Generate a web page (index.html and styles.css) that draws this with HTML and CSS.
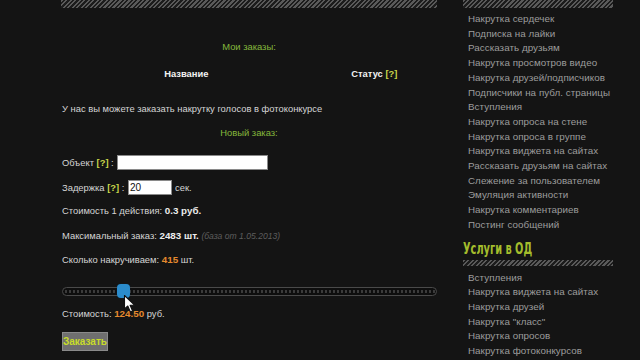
FILE: index.html
```html
<!DOCTYPE html>
<html lang="ru">
<head>
<meta charset="utf-8">
<title>Заказы</title>
<link rel="stylesheet" href="styles.css">
</head>
<body>
<div class="page">
  <main class="main">
    <div class="stripe stripe-top"></div>
    <div class="title t-orders">Мои заказы:</div>
    <div class="orders-head">
      <div class="col">Название</div>
      <div class="col">Статус <span class="help">[?]</span></div>
    </div>
    <p class="line l-intro">У нас вы можете заказать накрутку голосов в фотоконкурсе</p>
    <div class="title t-new">Новый заказ:</div>
    <div class="row r-object">Объект <span class="help">[?]</span> : <span class="field field-wide"></span></div>
    <div class="row r-delay">Задержка <span class="help">[?]</span> : <span class="field field-short">20</span><span class="unit">сек.</span></div>
    <p class="line l-cost1">Стоимость 1 действия: <b>0.3 руб.</b></p>
    <p class="line l-max">Максимальный заказ: <b>2483 шт.</b> <i class="note">(база от 1.05.2013)</i></p>
    <p class="line l-count">Сколько накручиваем: <b class="accent">415</b> шт.</p>
    <div class="slider">
      <div class="track"></div>
      <div class="handle"></div>
      <svg class="cursor" width="16" height="20" viewBox="0 0 16 20"><path d="M1.5 1.5 L1.5 15 L4.8 12 L7.4 18 L9.6 17 L7.1 11.2 L11.6 11.2 Z" fill="#fff" stroke="#111" stroke-width="1.1" stroke-linejoin="round"/></svg>
    </div>
    <p class="line l-total">Стоимость: <b class="accent">124.50</b> руб.</p>
    <div class="btn">Заказать</div>
  </main>
  <aside class="side">
    <div class="stripe stripe-top side-stripe"></div>
    <ul class="menu">
      <li>Накрутка сердечек</li>
      <li>Подписка на лайки</li>
      <li>Рассказать друзьям</li>
      <li>Накрутка просмотров видео</li>
      <li>Накрутка друзей/подписчиков</li>
      <li>Подписчики на публ. страницы</li>
      <li>Вступления</li>
      <li>Накрутка опроса на стене</li>
      <li>Накрутка опроса в группе</li>
      <li>Накрутка виджета на сайтах</li>
      <li>Рассказать друзьям на сайтах</li>
      <li>Слежение за пользователем</li>
      <li>Эмуляция активности</li>
      <li>Накрутка комментариев</li>
      <li>Постинг сообщений</li>
    </ul>
    <h2 class="side-title">Услуги в ОД</h2>
    <div class="stripe side-stripe stripe-mid"></div>
    <ul class="menu menu-od">
      <li>Вступления</li>
      <li>Накрутка виджета на сайтах</li>
      <li>Накрутка друзей</li>
      <li>Накрутка "класс"</li>
      <li>Накрутка опросов</li>
      <li>Накрутка фотоконкурсов</li>
    </ul>
  </aside>
</div>
</body>
</html>
```
FILE: styles.css
```css
html, body {
  margin: 0;
  padding: 0;
  background: #141414;
  height: 100%;
  overflow: hidden;
}
body {
  font-family: "Liberation Sans", Arial, sans-serif;
  font-size: 9.4px;
  color: #d4d4d4;
}
.page {
  display: flex;
  gap: 26px;
  padding-left: 61px;
}
.main {
  width: 376px;
  display: flex;
  flex-direction: column;
}
.stripe {
  background: repeating-linear-gradient(135deg, #5a5a5a 0 1.6px, #1c1c1c 1.6px 3.2px);
}
.stripe-top { height: 8px; }
.title {
  color: #84b83c;
  text-align: center;
  line-height: 14px;
}
.t-orders { margin-top: 32px; }
.t-new { margin-top: 10px; }
.orders-head {
  display: grid;
  grid-template-columns: 2fr 1fr;
  margin-top: 13px;
  line-height: 14px;
  font-weight: bold;
  color: #f2f2f2;
  text-align: center;
}
.help { color: #c9d64a; font-weight: bold; }
.line {
  margin: 0;
  line-height: 14px;
  padding-left: 1px;
}
.line b { font-weight: bold; color: #ececec; font-size: 9.8px; }
.l-intro { margin-top: 21px; }
.row {
  display: flex;
  align-items: center;
  height: 16px;
  padding-left: 1px;
  white-space: pre;
}
.r-object { margin-top: 14px; }
.r-delay { margin-top: 9px; }
.field {
  display: inline-block;
  background: #fff;
  height: 15px;
  border: 1px solid #8a8a8a;
  box-sizing: border-box;
  color: #111;
  font-family: "Liberation Sans", sans-serif;
  font-size: 10px;
  line-height: 13px;
  padding-left: 1px;
}
.field-wide { width: 151px; margin-left: 1px; }
.field-short { width: 44px; margin-left: 1px; }
.unit { margin-left: 3px; }
.l-cost1 { margin-top: 9px; }
.l-max { margin-top: 11px; }
.note { color: #5e5e5e; font-size: 8.6px; }
.l-count { margin-top: 10px; }
.line b.accent { color: #e58a2e; }
.slider {
  position: relative;
  height: 14px;
  margin-top: 17px;
}
.track {
  position: absolute;
  left: 1px;
  right: 0;
  top: 3px;
  height: 9px;
  border: 1px solid #4a4a4a;
  border-radius: 5px;
  box-sizing: border-box;
  background-color: #0e0e0e;
  background-image: radial-gradient(circle, #3c3c3c 1.1px, transparent 1.5px);
  background-size: 4px 7px;
  background-position: 1px 0;
}
.handle {
  position: absolute;
  left: 56px;
  top: 0;
  width: 13px;
  height: 14px;
  border-radius: 4px;
  background: #2b8ccc;
  box-shadow: 0 0 1px #0a3a5a;
}
.cursor {
  position: absolute;
  left: 62px;
  top: 10px;
}
.l-total { margin-top: 9px; }
.btn {
  align-self: flex-start;
  margin-top: 11px;
  margin-left: 1px;
  width: 46px;
  height: 19px;
  background: #6f6f6f;
  border: 1px solid #8a8a8a;
  box-sizing: border-box;
  color: #c8dc2a;
  font-weight: bold;
  font-size: 10px;
  line-height: 17px;
  text-align: center;
}
.side {
  width: 150px;
  display: flex;
  flex-direction: column;
}
.menu {
  list-style: none;
  margin: 4px 0 0;
  padding: 0 0 0 5px;
  color: #9d9d9d;
  font-size: 9.8px;
  line-height: 14.7px;
  letter-spacing: 0.05px;
  white-space: nowrap;
}
.side-title {
  margin: 7px 0 2px;
  height: 18px;
  line-height: 18px;
  font-family: "DejaVu Sans Condensed", "DejaVu Sans", sans-serif;
  font-weight: bold;
  font-size: 13px;
  color: #a4bd2c;
  transform: scale(0.84, 1.2);
  transform-origin: left center;
}
.stripe-mid { height: 6px; }
.menu-od { margin-top: 5px; }
```
